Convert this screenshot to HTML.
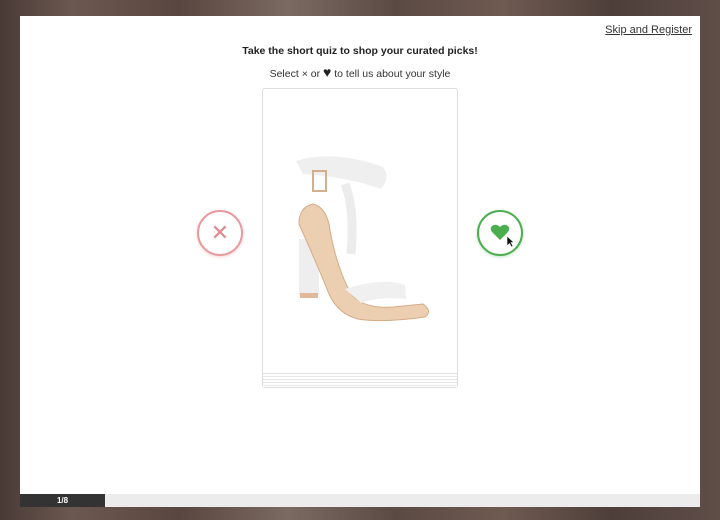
<!DOCTYPE html>
<html><head><style>
body{margin:0;width:720px;height:520px;overflow:hidden;font-family:"Liberation Sans",sans-serif;
background:linear-gradient(90deg,#4a3a36 0%,#6b5850 10%,#5a4640 25%,#7a6a62 40%,#5b4a44 55%,#6e5a50 70%,#4e3e3a 85%,#5f4e48 100%);}
.modal{position:absolute;left:20px;top:16px;width:680px;height:491px;background:#fff;}
.skip{position:absolute;right:8px;top:8px;font-size:11px;color:#333;text-decoration:underline;}
.t1{position:absolute;top:29px;left:0;width:680px;text-align:center;font-size:10.5px;font-weight:bold;color:#222;}
.t2{position:absolute;top:48px;left:0;width:680px;text-align:center;font-size:10.5px;color:#333;}
.card{position:absolute;left:242px;top:72px;width:194px;height:298px;border:1px solid #ddd;border-radius:3px;background:#fff;}
.lines{position:absolute;left:0;right:0;bottom:0;height:13px;background:repeating-linear-gradient(#fff 0,#fff 2px,#e6e6e6 2px,#e6e6e6 3px);border-top:1px solid #e0e0e0}
.c{position:absolute;width:46px;height:46px;border-radius:50%;top:194px;box-sizing:border-box;background:#fff}
.x{left:177px;border:2px solid #e89a9e;color:#e0898d;font-size:22px;text-align:center;line-height:42px;box-shadow:0 1px 3px rgba(220,120,120,.3)}
.h{left:457px;border:2px solid #4cae4f;box-shadow:0 1px 3px rgba(60,160,60,.3)}
.bar{position:absolute;left:0;top:478px;width:680px;height:13px;background:#ececec}
.bar div{width:85px;height:13px;background:#333;color:#fff;font-size:8px;font-weight:bold;text-align:center;line-height:13px}
</style></head><body>
<div class="modal">
<div class="skip">Skip and Register</div>
<div class="t1">Take the short quiz to shop your curated picks!</div>
<div class="t2">Select × or <span style="font-size:14px;color:#222">&#9829;</span> to tell us about your style</div>
<div class="card">
<svg width="194" height="298" style="position:absolute;left:0;top:0">
<path d="M33 72 Q70 60 120 78 Q128 88 118 100 Q85 88 40 85 Z" fill="#efefef"/>
<path d="M82 95 Q92 120 88 165" stroke="#ececec" stroke-width="9" fill="none"/>
<rect x="50" y="82" width="13" height="20" fill="none" stroke="#d2b08e" stroke-width="2"/>
<rect x="36" y="150" width="20" height="56" fill="#eeeeee"/>
<rect x="37" y="204" width="18" height="5" fill="#e0b99a"/>
<path d="M36 135 Q36 118 50 115 Q62 118 66 135 Q72 175 88 205 Q100 220 130 218 L160 215 Q170 222 162 228 Q120 234 95 230 Q75 225 66 205 Q54 175 36 135 Z" fill="#ebcfb0" stroke="#d6ab88"/>
<path d="M82 200 Q120 188 142 196 L143 210 Q118 207 98 214 Z" fill="#f0f0f0"/>
</svg>
<div class="lines"></div>
</div>
<div class="c x">✕</div>
<div class="c h"><svg width="42" height="42" viewBox="0 0 42 42"><path d="M21 28 L14 21 Q10 17 13 14 Q17 11 21 15 Q25 11 29 14 Q32 17 28 21 Z" fill="#4cae4f"/><path d="M28 24 L28 34 L30.5 31.5 L32.5 35 L34 34 L32 30.5 L35 30.5 Z" fill="#111" stroke="#fff" stroke-width=".6"/></svg></div>
<div class="bar"><div>1/8</div></div>
</div>
</body></html>
